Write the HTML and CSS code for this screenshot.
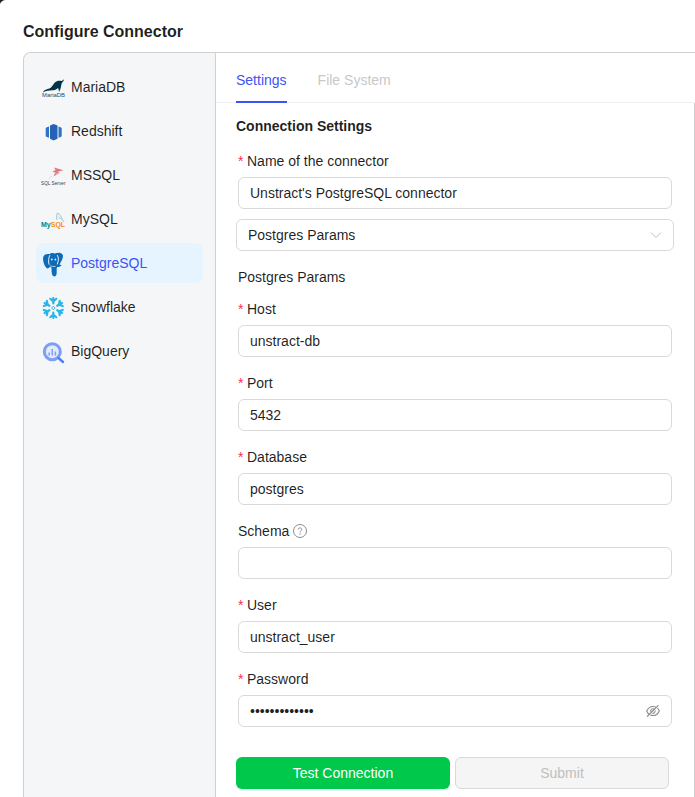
FILE: index.html
```html
<!DOCTYPE html>
<html lang="en">
<head>
<meta charset="utf-8">
<title>Configure Connector</title>
<link rel="stylesheet" href="styles.css">
</head>
<body>
<svg class="corner" width="8" height="8" viewBox="0 0 8 8"><path d="M0 0h5Q1 .8 0 4z" fill="#1a1f2b"/></svg>
<main class="modal">
  <h1 class="title">Configure Connector</h1>
  <div class="panel">
    <nav class="sidebar">
      <a class="item">
        <svg class="logo" viewBox="0 0 24 24"><path d="M2 17.500c1-2.800 4-3.200 6.300-4 2.700-1 3.700-4.700 6.200-6.600 1.900-1.400 4.300-1.500 6-1 .5.100 1-.4 2.500-1.600-.3 2-1.200 2.800-2.200 3.800-.9 2.400-.6 5.800-2.800 9-.2-1.700-.2-3-1-4.200-1.500 1.700-3.700 2.100-5.700 2.400-3.200.4-6-.1-9.300 2.200z" fill="#003545"/><text class="tiny" x="1" y="22" textLength="23" lengthAdjust="spacingAndGlyphs" fill="#24505e">MariaDB</text></svg>
        <span>MariaDB</span>
      </a>
      <a class="item">
        <svg class="logo" viewBox="0 0 24 24"><path d="M8 7.500L5.800 8.300c-.7.300-1.100.6-1.100 1.200v7.200c0 .6.400.9 1.100 1.200L8 18.700z" fill="#2f72c4"/><path d="M17.500 7.500l2.100.8c.7.300 1.100.6 1.100 1.200v7.200c0 .6-.4.900-1.100 1.200l-2.100.8z" fill="#2f72c4"/><path d="M9 6.500L12.700 5l3.800 1.500v13.200L12.700 21.500 9 19.700z" fill="#2561b5"/></svg>
        <span>Redshift</span>
      </a>
      <a class="item">
        <svg class="logo" viewBox="0 0 24 24"><path d="M13 4.500l9.500 2.800-6 1.500 2 1-6 3.800 1.700-3.800-3-1.500 3.500-1z" fill="#e0767a"/><path d="M13 9.500l3.500 1M11 13c-1.400.8-2.500 1.600-3 3" stroke="#d0d0d0" fill="none" stroke-width=".8"/><text class="tinier" x="0" y="22" textLength="24.500" lengthAdjust="spacingAndGlyphs" fill="#3c3c3c">SQL Server</text></svg>
        <span>MSSQL</span>
      </a>
      <a class="item">
        <svg class="logo" viewBox="0 0 24 24"><path d="M16 13c-.6-3.500-.4-5.500.5-7 2 1 3.800 3.200 4.700 6.300.4.900 1 1.600 1.800 2.700M17.500 10c1.200.7 2 1.300 2.800 2.300" stroke="#6fb3bd" stroke-width=".7" fill="none"/><text class="small-logo" x="0" y="20"><tspan fill="#0f8174">My</tspan><tspan fill="#f29111">SQL</tspan></text></svg>
        <span>MySQL</span>
      </a>
      <a class="item active">
        <svg class="logo" viewBox="0 0 24 24"><path d="M6.500 3C3.800 3 2 4.800 2 7.500c0 3.300 1.500 7.500 3.300 9.300 1.300 1.200 2.500.4 3.500-1l1.700.7c0 2.300 0 5.500.8 7.500.5 1.300 2.300 1.800 3.300 1 .9-.7 1.100-2.200 1.100-4.200 0-1.800 0-3.600.2-4.500 1.800-.2 3.700-.8 4.800-2l-2.200-.9c1.500-2.600 3.500-5.600 3.500-8.400 0-2-1.800-3.300-4-3.300-1.500 0-2.900.3-4 .9-1-.5-2.200-.8-3.800-.5C9.200 3.300 7.800 3 6.500 3z" fill="#0f6bb5"/><path d="M8.700 4.500c-1.200 2.300-1.500 5.500-.7 8.800M16.500 4.500c1.300 2 1.200 5-.1 8.500" stroke="#e6f4ff" stroke-width="1" fill="none" stroke-linecap="round"/><path d="M9 14.500c1.300 1 3.500 1 5.500 1" stroke="#e6f4ff" stroke-width=".7" fill="none"/><circle cx="10.800" cy="8.500" r=".9" fill="#e6f4ff"/><circle cx="14.400" cy="8.500" r=".9" fill="#e6f4ff"/></svg>
        <span>PostgreSQL</span>
      </a>
      <a class="item">
        <svg class="logo" viewBox="0 0 24 24">
          <defs>
            <g id="arm" fill="none" stroke="#29b5e8" stroke-width="2.200" stroke-linecap="round" stroke-linejoin="round"><path d="M0-4.500v-5.500M-3-9.200L0-6.500l3-2.700"/></g>
          </defs>
          <g transform="translate(12.300 13)">
            <use href="#arm"/>
            <use href="#arm" transform="rotate(60)"/>
            <use href="#arm" transform="rotate(120)"/>
            <use href="#arm" transform="rotate(180)"/>
            <use href="#arm" transform="rotate(240)"/>
            <use href="#arm" transform="rotate(300)"/>
            <path d="M0-1.800L1.800 0 0 1.800-1.800 0z" fill="none" stroke="#29b5e8" stroke-width="1"/>
          </g>
        </svg>
        <span>Snowflake</span>
      </a>
      <a class="item">
        <svg class="logo" viewBox="0 0 24 24" fill="none"><circle cx="11.300" cy="12.700" r="8" fill="#e2eafc" stroke="#7c9ef5" stroke-width="3"/><path d="M17.500 19l4.500 4" stroke="#4f7ff0" stroke-width="2.400" stroke-linecap="round"/><path d="M8.200 13.500v3M11.300 10v6.500M14.400 12.500v4" stroke="#7c9ef5" stroke-width="1.500"/></svg>
        <span>BigQuery</span>
      </a>
    </nav>
    <section class="content">
      <div class="tabs">
        <span class="tab tab-on">Settings</span>
        <span class="tab tab-off">File System</span>
      </div>
      <form class="form">
        <h2 class="heading">Connection Settings</h2>
        <div class="field first">
          <label class="label"><i class="star">*</i>Name of the connector</label>
          <input class="input" value="Unstract's PostgreSQL connector">
        </div>
        <div class="select">
          <span>Postgres Params</span>
          <svg class="chev" width="12" height="12" viewBox="0 0 12 12"><path d="M1 3.500l5 5 5-5" fill="none" stroke="#bfbfbf" stroke-width="1"/></svg>
        </div>
        <div class="sub">Postgres Params</div>
        <div class="field host">
          <label class="label"><i class="star">*</i>Host</label>
          <input class="input" value="unstract-db">
        </div>
        <div class="field">
          <label class="label"><i class="star">*</i>Port</label>
          <input class="input" value="5432">
        </div>
        <div class="field">
          <label class="label"><i class="star">*</i>Database</label>
          <input class="input" value="postgres">
        </div>
        <div class="field">
          <label class="label">Schema
            <svg class="help" width="14" height="14" viewBox="0 0 14 14"><circle cx="7" cy="7" r="6.500" fill="none" stroke="#8c8c8c"/><path d="M5.200 5.600c0-1 .8-1.700 1.800-1.700s1.800.7 1.800 1.600c0 1.300-1.800 1.300-1.800 2.800" fill="none" stroke="#8c8c8c"/><circle cx="7" cy="10" r=".7" fill="#8c8c8c"/></svg>
          </label>
          <input class="input" value="">
        </div>
        <div class="field">
          <label class="label"><i class="star">*</i>User</label>
          <input class="input" value="unstract_user">
        </div>
        <div class="field">
          <label class="label"><i class="star">*</i>Password</label>
          <div class="pw">
            <input class="input" type="password" value="1234567890123">
            <svg class="eye" width="14" height="14" viewBox="64 64 896 896" fill="#8c8c8c"><path d="M942.200 486.200Q889.470 375.110 816.700 305l-50.880 50.880C807.310 395.530 843.450 447.400 874.700 512 791.500 684.200 673.400 766 512 766q-72.670 0-133.870-22.380L323 798.750Q408 838 512 838q288.300 0 430.200-300.300a60.290 60.290 0 000-51.500zm-63.570-320.640L836 122.880a8 8 0 00-11.320 0L715.310 232.200Q624.860 186 512 186q-288.300 0-430.200 300.300a60.300 60.300 0 000 51.500q56.690 119.400 136.500 191.410L112.480 835a8 8 0 000 11.310L155.170 889a8 8 0 0011.310 0l712.150-712.120a8 8 0 000-11.320zM149.300 512C232.600 339.800 350.700 258 512 258c54.540 0 104.130 9.360 149.120 28.390l-70.300 70.300a176 176 0 00-238.130 238.130l-83.420 83.420C223.100 637.490 183.300 582.280 149.300 512zm246.700 0a112.110 112.110 0 01146.200-106.690L401.310 546.200A112 112 0 01396 512z"/><path d="M508 624c-3.460 0-6.870-.16-10.250-.47l-52.820 52.820a176.090 176.090 0 00227.420-227.420l-52.820 52.820c.31 3.380.47 6.790.47 10.250a111.940 111.940 0 01-112 112z"/></svg>
          </div>
        </div>
        <div class="actions">
          <button class="btn btn-test" type="button">Test Connection</button>
          <button class="btn btn-submit" type="button" disabled>Submit</button>
        </div>
      </form>
    </section>
  </div>
</main>
</body>
</html>
```
FILE: styles.css
```css
* { box-sizing: border-box; }
html, body { margin: 0; height: 797px; overflow: hidden; background: #fff; }
body {
  font-family: "Liberation Sans", Arial, sans-serif;
  font-size: 14px;
  line-height: 22px;
  color: rgba(0, 0, 0, 0.88);
}
.corner { position: absolute; left: 0; top: 0; }
.modal { padding: 21px 0 0 23px; width: 695px; height: 797px; overflow: hidden; }
.title { margin: 0 0 9px; height: 22px; font-size: 16px; line-height: 22px; font-weight: 700; color: rgba(0,0,0,.88); }
.panel {
  display: flex;
  width: 672px;
  height: 760px;
  border: 1px solid #d0d0d0;
  border-right: 0;
  border-bottom: 0;
  border-radius: 8px 0 0 0;
  background: #fff;
}
.sidebar {
  flex: 0 0 192px;
  display: flex;
  flex-direction: column;
  gap: 4px;
  padding: 14px 12px 0;
  background: #f5f6f8;
  border-right: 1px solid #d0d0d0;
  border-top-left-radius: 8px;
}
.item { display: flex; align-items: center; height: 40px; padding-left: 5px; gap: 6px; border-radius: 8px; }
.item.active { background: #e6f4ff; color: #3d52f5; }
.logo { width: 24px; height: 24px; flex: none; overflow: visible; }
.tiny { font-size: 4.500px; font-family: "Liberation Sans", sans-serif; }
.tinier { font-size: 4.500px; font-family: "Liberation Sans", sans-serif; }
.small-logo { font-size: 7px; font-weight: 700; font-family: "Liberation Sans", sans-serif; }
.content { flex: 0 0 479px; min-width: 0; display: flex; flex-direction: column; }
.tabs {
  display: flex;
  gap: 31px;
  height: 50px;
  padding-left: 20px;
  border-bottom: 1px solid #f0f0f0;
}
.tab { display: block; height: 50px; line-height: 54px; }
.tab-on { color: #3d52f5; border-bottom: 2px solid #3d52f5; }
.tab-off { color: #c8c8c8; }
.form { flex: 1; padding: 12px 20px 0; border-right: 1px solid #d0d0d0; }
.heading { margin: 0 0 13px; font-size: 14px; line-height: 22px; font-weight: 700; }
.field { padding: 0 2px; margin-bottom: 15px; }
.field.first { margin-bottom: 10px; }
.field.host { margin-top: 10px; }
.label { display: flex; align-items: center; height: 22px; margin-bottom: 5px; }
.star { font-style: normal; color: #ff2d55; width: 9px; font-family: "Liberation Sans", sans-serif; }
.help { margin-left: 4px; }
.input {
  display: block;
  width: 100%;
  height: 32px;
  padding: 0 11px;
  border: 1px solid #d9d9d9;
  border-radius: 6px;
  background: #fff;
  color: rgba(0,0,0,.88);
  font: 14px/22px "Liberation Sans", Arial, sans-serif;
  outline: none;
}
.select {
  display: flex;
  align-items: center;
  justify-content: space-between;
  height: 32px;
  padding: 0 11px;
  border: 1px solid #d9d9d9;
  border-radius: 6px;
}
.sub { padding-left: 2px; margin-top: 15px; height: 22px; }
.pw { position: relative; }
.eye { position: absolute; right: 12px; top: 9px; }
.actions { display: flex; gap: 5px; padding-top: 15px; }
.btn { width: 214px; height: 32px; border-radius: 6px; font: 14px "Liberation Sans", Arial, sans-serif; padding: 0; }
.btn-test { background: #00c84b; border: 0; color: #fff; box-shadow: 0 2px 0 rgba(5,145,255,.1); }
.btn-submit { background: #f5f5f5; border: 1px solid #d9d9d9; color: #bfbfbf; }
```
